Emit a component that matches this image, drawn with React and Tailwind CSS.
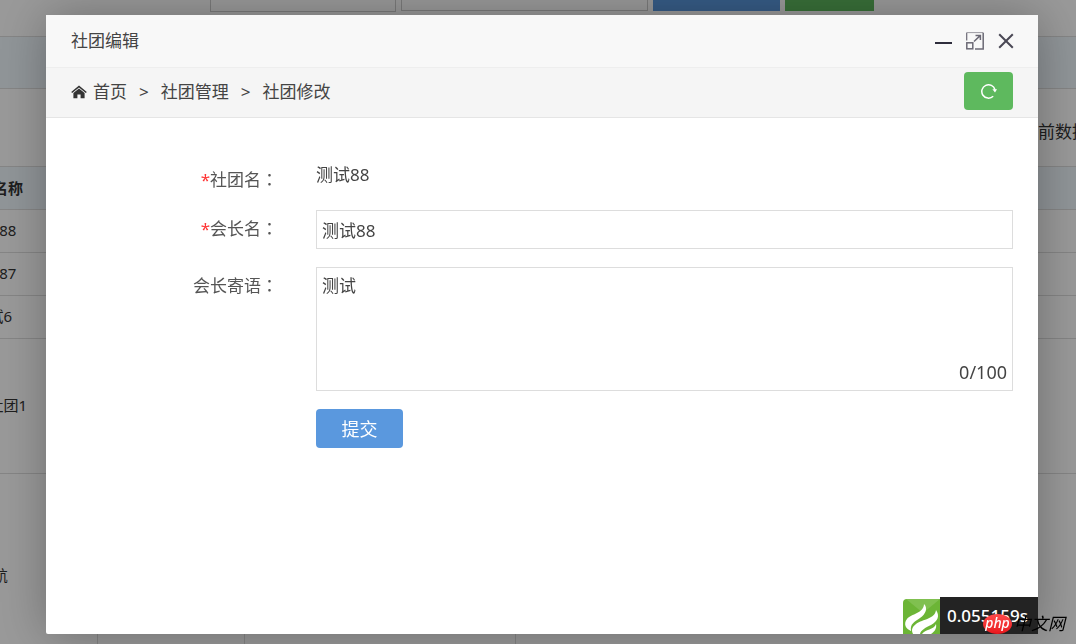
import React, { useState } from 'react';

const FONT = "font-['Noto_Sans','Noto_Sans_CJK_SC',sans-serif]";

const clubs = [
  { name: '测试88', height: 'h-[43px]' },
  { name: '测试87', height: 'h-[43px]' },
  { name: '测试6', height: 'h-[43px]' },
  { name: '测试社团1', height: 'h-[135px]' },
  { name: '启航', height: 'h-[205px]' },
];

function HomeIcon() {
  return (
    <svg width="16" height="14" viewBox="0 0 16 14" fill="#333" aria-hidden="true">
      <path d="M8 0.4 L15.8 7 L14.8 8.1 L8 2.5 L1.2 8.1 L0.2 7 Z" />
      <path d="M8 3.4 L13.6 8 V13.2 H9.6 V9.6 H6.4 V13.2 H2.4 V8 Z" />
    </svg>
  );
}

function MaximizeIcon() {
  return (
    <svg width="18" height="18" viewBox="0 0 18 18" fill="none" stroke="#6b6975" strokeWidth="1.5" aria-hidden="true">
      <path d="M0.7 8.5 V0.7" strokeWidth="1.2" />
      <path d="M0.5 0.6 H17.2" strokeWidth="1" stroke="#9b9aa2" />
      <path d="M17.2 0.7 V17 H9" />
      <rect x="0.8" y="10.8" width="6" height="6" />
      <path d="M8 9.5 L14.2 3.6 M9.5 3.4 H14.4 V8" />
    </svg>
  );
}

function CloseIcon() {
  return (
    <svg width="16" height="16" viewBox="0 0 16 16" fill="none" stroke="#4a4855" strokeWidth="2" aria-hidden="true">
      <path d="M1.2 1.2 L14.8 14.8 M14.8 1.2 L1.2 14.8" />
    </svg>
  );
}

function RefreshIcon() {
  return (
    <svg width="16" height="16" viewBox="0 0 16 16" fill="none" stroke="#fff" strokeWidth="1.5" aria-hidden="true">
      <path d="M12.2 13.2 A6.7 6.7 0 1 1 14 6.8" />
      <path d="M11.4 6.2 H16 L14 9.4 Z" fill="#fff" stroke="none" />
    </svg>
  );
}

function ThinkLogo() {
  return (
    <svg width="37" height="35" viewBox="0 0 37 35" aria-hidden="true">
      <path d="M4 0 H37 V35 H0 V4 Q0 0 4 0 Z" fill="#6cb536" />
      <path d="M3 0 H37 L20 14 Z" fill="#80c050" />
      <path d="M21 5 C25 9 23 15 17 19 C11 23 7 25 8 32 C3 30 0 25 4 20 C8 15 21 14 21 5 Z" fill="#fff" />
      <path d="M33 11 C37 17 35 22 28 26 C22 29 18 31 17 35 H10 C8 31 9 28 13 25 C20 20 32 20 33 11 Z" fill="#fff" />
      <path d="M33 25 C34 30 31 33 28 35 H19 C22 30 31 31 33 25 Z" fill="#fff" />
    </svg>
  );
}

function FieldLabel({ htmlFor, required, children }) {
  return (
    <label htmlFor={htmlFor} className="w-[232px] shrink-0 text-right text-[#555]">
      {required && <span className="text-[#ff3333]">*</span>}
      {children}
      <span className="font-['Noto_Sans_CJK_TC',sans-serif]">：</span>
    </label>
  );
}

function ListPage() {
  return (
    <div className="h-screen overflow-hidden bg-white text-[15px] text-[#333]" aria-hidden="true">
      <div className="flex h-[37px] items-start gap-[5px] border-b border-[#ddd] pl-[210px]">
        <div className="h-3 w-[186px] border border-t-0 border-[#ccc]" />
        <div className="h-[11px] w-[247px] border border-t-0 border-[#ccc]" />
        <div className="h-[11px] w-[127px] bg-[#5a98de]" />
        <div className="h-[11px] w-[89px] bg-[#5eb95e]" />
      </div>
      <div className="h-[52px] border-b border-[#ddd] bg-[#f0f8fd]" />
      <div className="flex h-[78px] items-center justify-end border-b border-[#ddd] pt-2">
        <span className="w-[55px] overflow-hidden text-[17px] whitespace-nowrap">当前数据</span>
      </div>
      <div className="-ml-[111px]">
        <table className="w-full table-fixed border-collapse text-center">
          <colgroup>
            <col className="w-[208px]" />
            <col className="w-[147px]" />
            <col className="w-[271px]" />
            <col />
          </colgroup>
          <thead>
            <tr className="h-[42px] border-b border-[#ddd] bg-[#f0f8fd]">
              <th>社团名称</th>
              <th /><th /><th />
            </tr>
          </thead>
          <tbody>
            {clubs.map((club) => (
              <tr key={club.name} className={`${club.height} border-b border-[#ddd]`}>
                <td className="border-r border-[#ddd]">{club.name}</td>
                <td className="border-r border-[#ddd]" />
                <td className="border-r border-[#ddd]" />
                <td />
              </tr>
            ))}
          </tbody>
        </table>
      </div>
    </div>
  );
}

export default function App() {
  const [president, setPresident] = useState('测试88');
  const [message, setMessage] = useState('测试');

  return (
    <div className={`relative ${FONT}`}>
      <ListPage />

      <div className="fixed inset-0 flex bg-black/40 pt-[15px] pr-[38px] pb-[10px] pl-[46px]">
        <div
          role="dialog"
          aria-label="社团编辑"
          className="relative flex min-w-0 flex-1 flex-col rounded-xs bg-white text-[17px] leading-6 text-[#444] shadow-[1px_1px_50px_rgba(0,0,0,0.3)]"
        >
          {/* title bar */}
          <header className="flex h-[53px] shrink-0 items-center justify-between border-b border-[#eee] bg-[#f8f8f8] pr-6 pl-[25px]">
            <h1>社团编辑</h1>
            <div className="flex items-center gap-[14px]">
              <button type="button" aria-label="最小化" className="flex h-4 w-[17px] items-center">
                <span className="mt-1 h-0.5 w-full bg-[#2e2d3c]" />
              </button>
              <button type="button" aria-label="最大化"><MaximizeIcon /></button>
              <button type="button" aria-label="关闭"><CloseIcon /></button>
            </div>
          </header>

          {/* breadcrumb */}
          <nav className="flex h-[50px] shrink-0 items-center border-b border-[#e5e5e5] bg-[#f5f5f5] px-[25px] pb-0.5">
            <HomeIcon />
            <a href="#" className="ml-1.5">首页</a>
            <span className="mx-3">&gt;</span>
            <span>社团管理</span>
            <span className="mx-3">&gt;</span>
            <span>社团修改</span>
            <button
              type="button"
              aria-label="刷新"
              className="mb-0.5 ml-auto flex h-[38px] w-[49px] items-center justify-center rounded bg-[#5eb95e]"
            >
              <RefreshIcon />
            </button>
          </nav>

          <form className="flex flex-col gap-[18px] pt-[45px] pr-[25px]" onSubmit={(e) => e.preventDefault()}>
            <div className="flex items-start gap-[38px]">
              <span className="flex pt-1"><FieldLabel required>社团名</FieldLabel></span>
              <span>测试88</span>
            </div>
            <div className="flex items-start gap-[38px]">
              <span className="flex pt-1.5"><FieldLabel htmlFor="president" required>会长名</FieldLabel></span>
              <input
                id="president"
                value={president}
                onChange={(e) => setPresident(e.target.value)}
                className="h-[39px] min-w-0 flex-1 border border-[#ddd] px-[5px]"
              />
            </div>
            <div className="flex items-start gap-[38px]">
              <span className="flex pt-1.5"><FieldLabel htmlFor="message">会长寄语</FieldLabel></span>
              <div className="relative flex flex-1">
                <textarea
                  id="message"
                  value={message}
                  onChange={(e) => setMessage(e.target.value)}
                  className="h-[124px] w-full resize-none border border-[#ddd] px-[5px] py-1.5"
                />
                <span className="absolute right-1.5 bottom-[7px] text-lg leading-6">0/100</span>
              </div>
            </div>
            <div className="pl-[270px]">
              <button type="submit" className="h-[39px] w-[87px] rounded bg-[#5a98de] text-lg text-white">提交</button>
            </div>
          </form>

          {/* page trace badge */}
          <div className="absolute right-0 bottom-0 flex items-end">
            <ThinkLogo />
            <div className="h-[37px] w-[98px] bg-[#232323] pl-[7px] leading-[37px] font-medium text-white">0.055159s</div>
          </div>
        </div>
      </div>

      {/* watermark */}
      <div className="fixed right-[11px] bottom-[10px] flex items-center gap-0.5 italic">
        <span className="flex h-5 w-[29px] items-center justify-center rounded-[50%] bg-linear-to-b from-[#ff4a4a] to-[#e8141c] pb-0.5 text-sm leading-4 font-medium text-white">php</span>
        <span className="text-[17px] leading-5 text-black">中文网</span>
      </div>
    </div>
  );
}
